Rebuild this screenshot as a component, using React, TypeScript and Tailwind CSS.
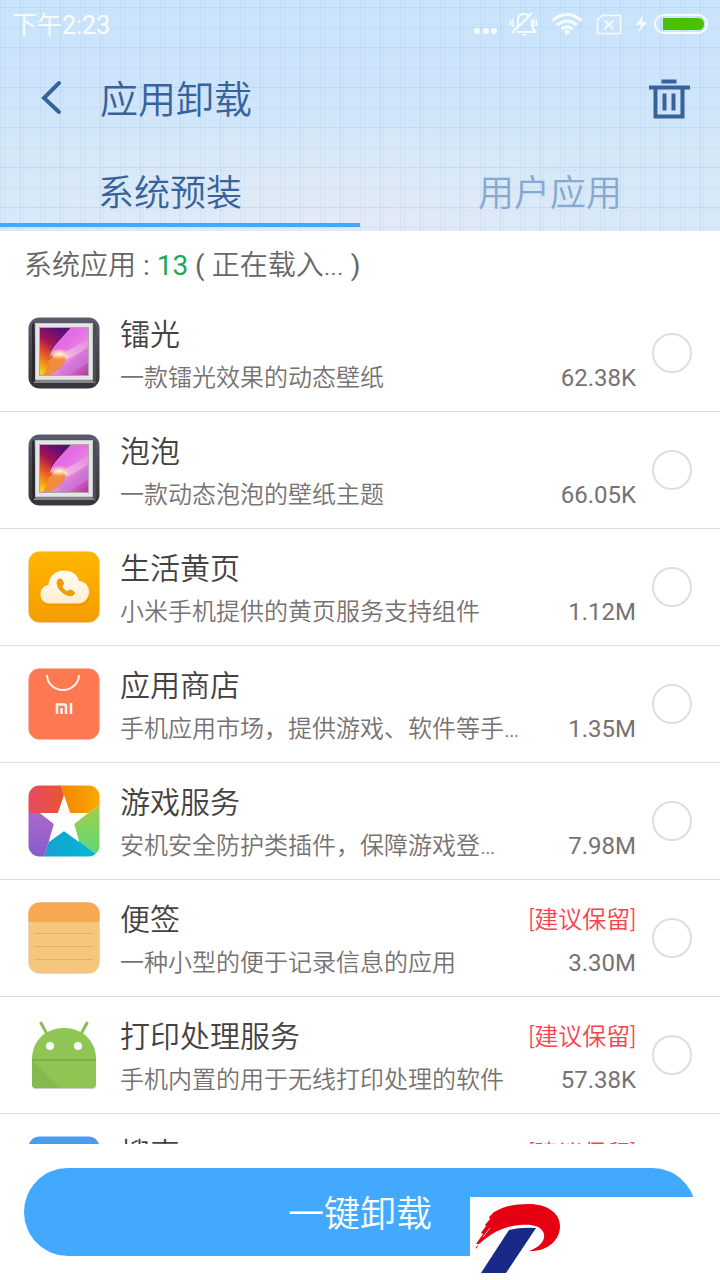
import React from 'react';

const apps = [
  { name: '镭光', desc: '一款镭光效果的动态壁纸', size: '62.38K', keep: false, icon: <FrameIcon /> },
  { name: '泡泡', desc: '一款动态泡泡的壁纸主题', size: '66.05K', keep: false, icon: <FrameIcon /> },
  { name: '生活黄页', desc: '小米手机提供的黄页服务支持组件', size: '1.12M', keep: false, icon: <YellowPageIcon /> },
  { name: '应用商店', desc: '手机应用市场，提供游戏、软件等手…', size: '1.35M', keep: false, icon: <StoreIcon /> },
  { name: '游戏服务', desc: '安机安全防护类插件，保障游戏登…', size: '7.98M', keep: false, icon: <GameIcon /> },
  { name: '便签', desc: '一种小型的便于记录信息的应用', size: '3.30M', keep: true, icon: <NoteIcon /> },
  { name: '打印处理服务', desc: '手机内置的用于无线打印处理的软件', size: '57.38K', keep: true, icon: <AndroidIcon /> },
  { name: '搜索', desc: '', size: '', keep: true, icon: <SearchIcon /> },
];

function FrameIcon() {
  return (
    <svg viewBox="0 0 72 72" className="size-[72px] shrink-0">
      <defs>
        <linearGradient id="frame" x1="0" y1="0" x2="0" y2="1">
          <stop offset="0" stopColor="#5a5c6e" />
          <stop offset="0.5" stopColor="#45454f" />
          <stop offset="1" stopColor="#35353b" />
        </linearGradient>
        <linearGradient id="art" x1="0" y1="0" x2="1" y2="1">
          <stop offset="0" stopColor="#dd62d6" />
          <stop offset="0.45" stopColor="#e56ee8" />
          <stop offset="0.65" stopColor="#e58ade" />
          <stop offset="1" stopColor="#b2369f" />
        </linearGradient>
        <linearGradient id="dusk" x1="0.6" y1="0" x2="0.2" y2="1">
          <stop offset="0" stopColor="#54107a" />
          <stop offset="0.35" stopColor="#a41158" />
          <stop offset="0.65" stopColor="#ec5a20" />
          <stop offset="1" stopColor="#f6cf12" />
        </linearGradient>
        <linearGradient id="ray" x1="0" y1="1" x2="1" y2="0">
          <stop offset="0" stopColor="#fff0f4" />
          <stop offset="1" stopColor="#f3a6e4" stopOpacity="0.4" />
        </linearGradient>
        <radialGradient id="glow">
          <stop offset="0" stopColor="#fffbe8" />
          <stop offset="0.4" stopColor="#ffdcae" stopOpacity="0.8" />
          <stop offset="1" stopColor="#ffb0a0" stopOpacity="0" />
        </radialGradient>
      </defs>
      <rect x="0.5" y="0.5" width="71" height="71" rx="11" fill="url(#frame)" />
      <path d="M6 5 8 64 4 68V8Z" fill="#2a2a30" />
      <path d="M66 5 64 64 68 68V8Z" fill="#4c4c56" />
      <path d="M8 63H64L67 66H5Z" fill="#85858a" />
      <rect x="7" y="6" width="58" height="57" fill="#c7c7ca" />
      <rect x="8" y="7" width="56" height="55" fill="#e6e5e6" />
      <rect x="11" y="10" width="50" height="49" fill="#aaa8ac" />
      <rect x="12" y="11" width="48" height="47" fill="url(#art)" />
      <path d="M12 11H42L30 24Q23 31 22 38L30 39 26 46 22 53 18 58H12Z" fill="url(#dusk)" />
      <path d="M42 11 30 24Q23 31 21 38" fill="none" stroke="#57104e" strokeWidth="1" />
      <path d="M20 44Q30 35 38 41Q36 50 28 54L22 58H15L21 48Z" fill="#f08c3c" />
      <path d="M31 58V50Q48 42 60 30V46Q46 54 40 58Z" fill="#cf78dc" opacity="0.6" />
      <path d="M34 37 60 22V31L38 43Z" fill="url(#ray)" opacity="0.6" />
      <ellipse cx="31" cy="37" rx="12" ry="6" fill="url(#glow)" />
      <path d="M25 40Q31 34 40 40" fill="none" stroke="#fff0c8" strokeWidth="1" />
    </svg>
  );
}

function YellowPageIcon() {
  return (
    <svg viewBox="0 0 72 72" className="size-[72px] shrink-0">
      <defs>
        <linearGradient id="yellow" x1="0" y1="0" x2="0" y2="1">
          <stop offset="0" stopColor="#feb700" />
          <stop offset="1" stopColor="#f59c00" />
        </linearGradient>
        <linearGradient id="cloud" x1="0" y1="0" x2="0" y2="1">
          <stop offset="0" stopColor="#fffdf6" />
          <stop offset="1" stopColor="#fdedcc" />
        </linearGradient>
      </defs>
      <rect x="0.5" y="0.5" width="71" height="71" rx="11" fill="url(#yellow)" stroke="#dccfae" strokeWidth="0.5" />
      <path d="M22 55a9 9 0 0 1-1-18h32a9 9 0 0 1-1 18Z" fill="#e88f00" opacity="0.5" />
      <path d="M21 52.500C15.500 52.500 12.500 48 12.500 43.500C12.500 38 16 34.500 20.500 34C21 25 27.500 19.500 36 19.500C43.500 19.500 49.500 23.500 51 30C57 30 61 35 61 41C61 47 57 52.500 50 52.500Z" fill="url(#cloud)" />
      <path d="M30 29C31.500 27.500 33 27.500 34 29L35.500 32C36 33.500 34 34.500 34 35.500C34.500 37.500 37 40 39 40.500C40 40.500 41 38.500 42.500 39L45.500 40.500C47 41.500 46.500 43 45 44C38 47.500 26 36 30 29Z" fill="#f09c08" stroke="#f09c08" strokeWidth="1" />
    </svg>
  );
}

function StoreIcon() {
  return (
    <svg viewBox="0 0 72 72" className="size-[72px] shrink-0">
      <rect x="0.5" y="0.5" width="71" height="71" rx="11" fill="#fe7951" stroke="#e3c0b4" strokeWidth="0.5" />
      <path d="M19 7C19 15 26 22 35 22S51 15 51 7" fill="none" stroke="#fff2ed" strokeWidth="2" />
      <path d="M29 46V36.500H36Q38 36.500 38 38.500V46M33.500 40V46M43 35V46" fill="none" stroke="#fff2ed" strokeWidth="2.500" />
    </svg>
  );
}

function GameIcon() {
  return (
    <svg viewBox="0 0 72 72" className="size-[72px] shrink-0">
      <defs>
        <clipPath id="game">
          <rect x="0.5" y="0.5" width="71" height="71" rx="11" />
        </clipPath>
        <linearGradient id="g1">
          <stop offset="0" stopColor="#e84a62" />
          <stop offset="1" stopColor="#ea5532" />
        </linearGradient>
        <linearGradient id="g2">
          <stop offset="0" stopColor="#f38500" />
          <stop offset="1" stopColor="#f9aa00" />
        </linearGradient>
        <linearGradient id="g3" x1="0" y1="0" x2="0" y2="1">
          <stop offset="0" stopColor="#a4ce4c" />
          <stop offset="1" stopColor="#58d876" />
        </linearGradient>
        <linearGradient id="g4">
          <stop offset="0" stopColor="#16a0d0" />
          <stop offset="1" stopColor="#00bcd6" />
        </linearGradient>
        <linearGradient id="g5" x1="0" y1="0" x2="0" y2="1">
          <stop offset="0" stopColor="#ac68ca" />
          <stop offset="1" stopColor="#855cce" />
        </linearGradient>
      </defs>
      <g clipPath="url(#game)">
        <path d="M0 0H33L36 11 30 28 12 28H0Z" fill="url(#g1)" />
        <path d="M33 0H72V20L60 28 42 28 36 11Z" fill="url(#g2)" />
        <path d="M72 20V72L51 56 46 39 60 28Z" fill="url(#g3)" />
        <path d="M72 72H16L21 56 36 46 51 56 68 69Z" fill="url(#g4)" />
        <path d="M0 28H12L26 39 21 56 16 72H0Z" fill="url(#g5)" />
      </g>
      <path d="M36 10 42 28H60L46 39 51 57 36 46 21 57 26 39 12 28H30Z" fill="#fff" />
    </svg>
  );
}

function NoteIcon() {
  return (
    <svg viewBox="0 0 72 72" className="size-[72px] shrink-0">
      <rect x="0.5" y="0.5" width="71" height="71" rx="11" fill="#f5c77c" stroke="#ddd0bc" strokeWidth="0.5" />
      <path d="M0.500 20V12A11.500 11.500 0 0 1 12 0.500H60A11.500 11.500 0 0 1 71.500 12V20Z" fill="#f8a850" />
      <path d="M6 31.500H65M6 44.500H65M6 57.500H65" stroke="#deb06a" strokeWidth="1" />
    </svg>
  );
}

function AndroidIcon() {
  return (
    <svg viewBox="0 0 72 72" className="size-[72px] shrink-0">
      <path d="M13 4 19 15M59 4 53 15" stroke="#8bbf50" strokeWidth="3" strokeLinecap="round" />
      <path d="M4 42C4 22 18 10 36 10S68 22 68 42V66Q68 70 64 70H8Q4 70 4 66Z" fill="#c9cdc4" />
      <path d="M4 41C4 21 18 9 36 9S68 21 68 41V65Q68 69 64 69H8Q4 69 4 65Z" fill="#8fc552" />
      <path d="M4 41 31 69H8Q4 69 4 65Z" fill="#86b850" />
      <path d="M4 41H68" stroke="#78a843" strokeWidth="1.500" />
      <circle cx="22" cy="27" r="4" fill="#fafafa" />
      <circle cx="50" cy="27" r="4" fill="#fafafa" />
    </svg>
  );
}

function SearchIcon() {
  return (
    <svg viewBox="0 0 72 72" className="size-[72px] shrink-0">
      <rect x="0.5" y="0.5" width="71" height="71" rx="11" fill="#4a9bee" />
      <circle cx="33" cy="33" r="14" fill="none" stroke="#fff" strokeWidth="4" />
      <path d="M43 43 54 54" stroke="#fff" strokeWidth="4" />
    </svg>
  );
}

// ヘッダー背景の方眼
function GridPattern() {
  return (
    <svg className="absolute inset-0 -z-10 size-full" aria-hidden="true">
      <defs>
        <linearGradient id="sky" x1="0" y1="0" x2="0" y2="1">
          <stop offset="0" stopColor="#c9e4fb" />
          <stop offset="0.4" stopColor="#cfe4fb" />
          <stop offset="0.65" stopColor="#d4e8f8" />
          <stop offset="1" stopColor="#d8e8f9" />
        </linearGradient>
        <radialGradient id="blush" cx="0.43" cy="1" r="0.5">
          <stop offset="0" stopColor="#e6eaf5" />
          <stop offset="1" stopColor="#e2ebf6" stopOpacity="0" />
        </radialGradient>
        <pattern id="grid" width="40" height="40" x="20" y="7" patternUnits="userSpaceOnUse">
          <path d="M3.500 0V40M24.500 0V40M0 3.500H40" stroke="#9cc8ea" strokeOpacity="0.12" />
          <path d="M0.500 0V40M0 0.500H40" stroke="#8db8dc" strokeOpacity="0.25" />
          <path d="M20.500 0V40M0 20.500H40" stroke="#8db8dc" strokeOpacity="0.15" />
        </pattern>
      </defs>
      <rect width="100%" height="100%" fill="url(#sky)" />
      <rect width="100%" height="100%" fill="url(#blush)" />
      <rect width="100%" height="100%" fill="url(#grid)" />
    </svg>
  );
}

function StatusIcons() {
  return (
    <svg viewBox="0 0 240 28" className="h-7 w-60" fill="none" stroke="#f6fbff" aria-hidden="true">
      <g fill="#f6fbff" stroke="none">
        <circle cx="7" cy="21" r="3" />
        <circle cx="16" cy="21" r="3" />
        <circle cx="24" cy="21" r="3" />
        <circle cx="97" cy="22" r="2.500" />
        <path d="M173 5 166 15H171L168 23 177 12H172Z" />
        <path d="M51 24H58Q54.500 27 51 24Z" />
      </g>
      <path d="M44 20 48 16V9Q49 4 54 4Q58 4 60 6M62 10V16L65 22H47" strokeWidth="2" />
      <path d="M42 23 62 3" strokeWidth="2" />
      <path d="M43 9V17M40.500 10V16M64 9V17M66.500 10V16" strokeWidth="1.500" />
      <path d="M82.500 10.500Q97 -1.500 111.500 10.500M87 15Q97 7 107 15M91.500 19Q97 14.500 102.500 19" strokeWidth="3" />
      <path d="M132 5.500H150.500V23.500H127.500V10Z" strokeWidth="1.500" />
      <path d="M134.500 10.500 143.500 19M143.500 10.500 134.500 19" strokeWidth="2" />
      <rect x="185" y="5" width="52" height="18" rx="9" strokeWidth="2" />
      <path d="M193 8H228Q234 8 234 14T228 20H193Z" fill="#49c000" stroke="none" />
    </svg>
  );
}

function BrandLogo() {
  return (
    <svg viewBox="0 0 96 76" className="h-[76px] w-24" aria-hidden="true">
      <path d="M6 52 9 47 6 47 13 37 11 36 16 29 15 28 20 22 19 20 24 15 28 13C36 9 46 7 59 7C77 7 90 16 90 29C90 44 76 55 59 54C71 50 75 43 74 37C72 29 62 27 50 28C32 29 18 38 6 50Z" fill="#e60012" />
      <path d="M13 40 20 31" stroke="#fff" strokeWidth="0.8" />
      <path d="M39 33Q51 30 66 31L36 76H11Z" fill="#182987" />
    </svg>
  );
}

export default function App() {
  return (
    <div className="flex h-dvh flex-col bg-white font-[Roboto,'Noto_Sans_CJK_SC',sans-serif] font-[350] text-[#464242]">
      <header className="relative isolate shrink-0">
        <GridPattern />
        <div className="flex h-12 items-center justify-between pr-[10px] pl-3 text-2xl text-white/90">
          <span className="pt-1 text-[25px]">
            下午<span className="font-normal">2:23</span>
          </span>
          <StatusIcons />
        </div>
        <div className="flex h-[104px] items-center pr-7 pl-8 text-[#37639b]">
          <button type="button" aria-label="返回" className="mr-8">
            <svg viewBox="0 0 36 40" className="h-10 w-9" fill="none" stroke="currentColor" strokeWidth="4">
              <path d="M27 3 12 18 27 32" strokeLinecap="round" />
            </svg>
          </button>
          <h1 className="flex-1 text-[38px]">应用卸载</h1>
          <button type="button" aria-label="回收站">
            <svg viewBox="0 0 48 44" className="h-11 w-12" fill="none" stroke="currentColor" strokeWidth="4">
              <path d="M17.500 3.500H32.500M5 9.500H46M11.500 9.500V38.500H38.500V9.500M20.500 15.500V32.500M29.500 15.500V32.500" />
            </svg>
          </button>
        </div>
        <nav className="flex h-[79px] pb-1 text-4xl text-[#37639b]">
          <button type="button" className="flex-1 border-b-4 border-[#43a9ff] pt-3 pr-5">系统预装</button>
          <button type="button" className="flex-1 border-b-4 border-transparent pt-3 pl-5 text-[#87a8cf]">用户应用</button>
        </nav>
      </header>

      <p className="flex h-16 shrink-0 items-center px-6 pt-1.5 text-[28px] font-normal whitespace-pre text-[#666]">
        <span className="font-[350]">系统应用</span> : <span className="text-[#19a95b]">13</span> ( <span className="font-[350]">正在载入...</span> )
      </p>

      <ul className="min-h-0 flex-1 overflow-hidden">
        {apps.map((app) => (
          <li key={app.name} className="border-b border-[#dfdfdf]">
            <label className="flex h-[116px] items-center gap-4 px-7">
              {app.icon}
              <div className="ml-1 min-w-0 flex-1 pt-1.5">
                <div className="flex h-11 items-center justify-between">
                  <span className="text-3xl">{app.name}</span>
                  {app.keep && <span className="text-2xl text-[#f8424f]">[建议保留]</span>}
                </div>
                <div className="flex h-[42px] items-center justify-between text-2xl text-[#777272]">
                  <span className="truncate">{app.desc}</span>
                  <span className="font-normal">{app.size}</span>
                </div>
              </div>
              <input
                type="checkbox"
                className="size-10 shrink-0 appearance-none rounded-full border-2 border-[#dedede] checked:bg-[#43a9ff]"
              />
            </label>
          </li>
        ))}
      </ul>

      <footer className="relative shrink-0 p-6">
        <button type="button" className="h-[88px] w-full rounded-full bg-[#43a9ff] pt-1.5 text-4xl text-white">
          一键卸载
        </button>
        <div className="absolute right-0 bottom-0 h-[83px] w-[250px] bg-white">
          <BrandLogo />
        </div>
      </footer>
    </div>
  );
}
